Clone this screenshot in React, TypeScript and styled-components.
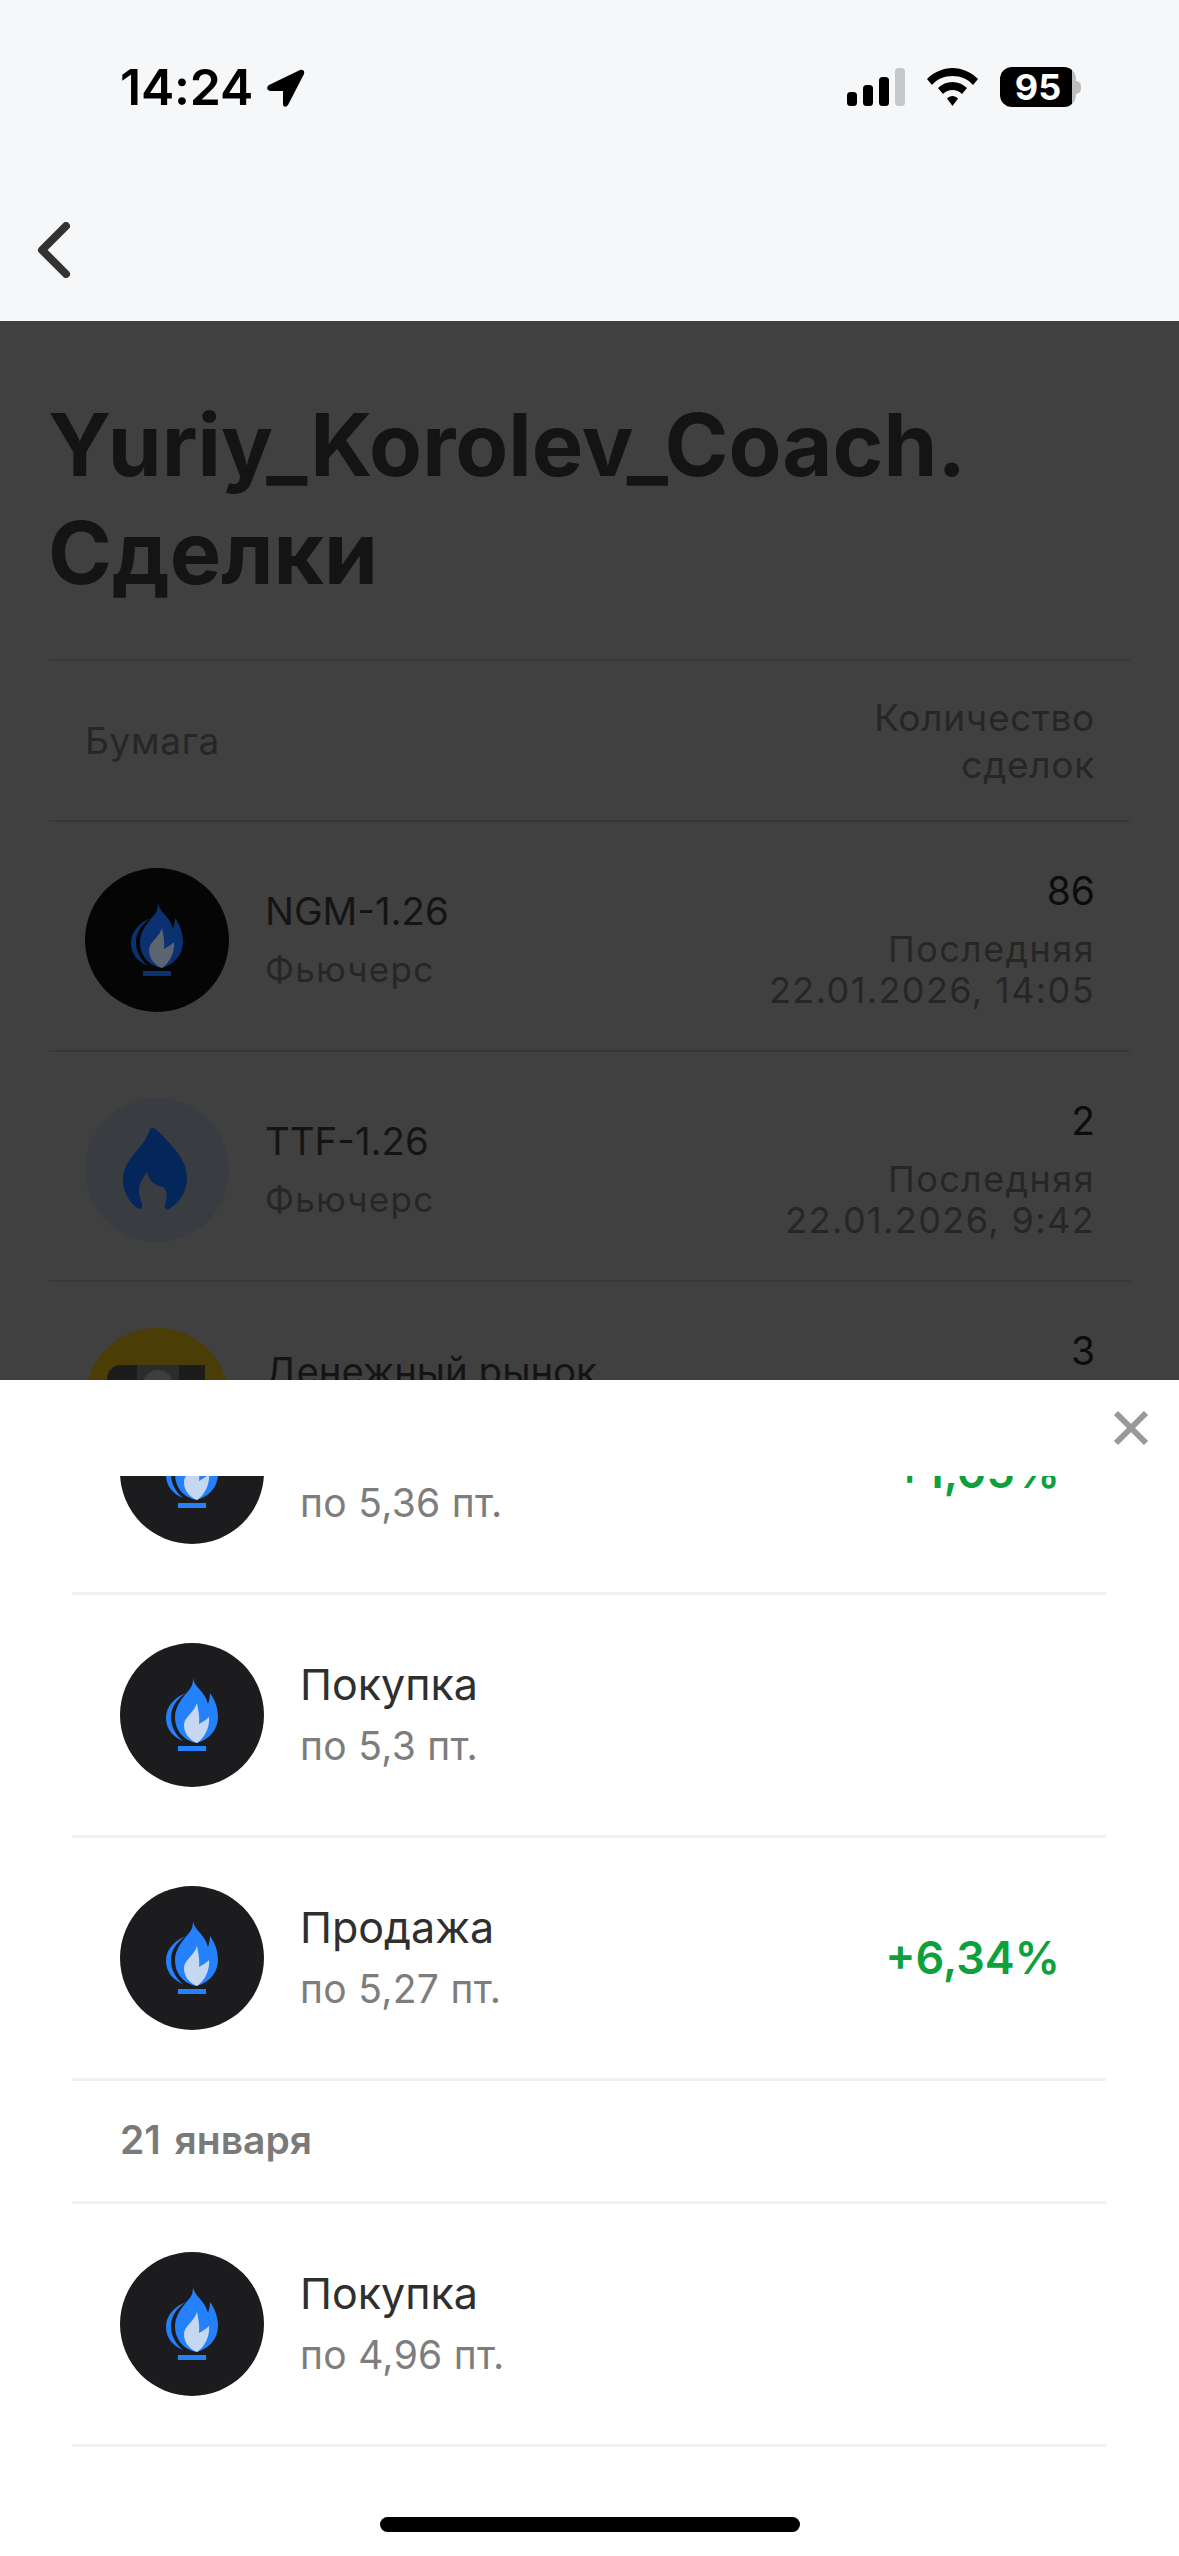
import React from 'react';
import styled, { createGlobalStyle } from 'styled-components';

const GlobalStyle = createGlobalStyle`
  html, body {
    margin: 0;
    padding: 0;
    background: #fff;
    font-family: "Inter", "Liberation Sans", sans-serif;
  }
  * {
    box-sizing: border-box;
  }
`;

const Page = styled.div`
  position: relative;
  width: 1179px;
  height: 2556px;
  display: flex;
  flex-direction: column;
  overflow: hidden;
`;

const TopArea = styled.header`
  height: 321px;
  flex: none;
  background: #f6f7f9;
  display: flex;
  flex-direction: column;
`;

const StatusBar = styled.div`
  height: 174px;
  padding: 67px 98px 0 120px;
  display: flex;
  justify-content: space-between;
  align-items: flex-start;
`;

const TimeGroup = styled.div`
  display: flex;
  align-items: center;
  gap: 13px;
`;

const Time = styled.span`
  font-size: 50px;
  line-height: 41px;
  font-weight: 600;
  color: #000;
  letter-spacing: -0.2px;
`;

const StatusIcons = styled.div`
  display: flex;
  align-items: center;
  gap: 22px;
`;

const Battery = styled.div`
  display: flex;
  align-items: center;
`;

const BatteryBody = styled.div`
  width: 76px;
  height: 40px;
  border-radius: 12px;
  background: linear-gradient(90deg, #000 95%, #bdbdbd 95%);
  color: #fff;
  font-size: 36px;
  font-weight: 700;
  display: flex;
  align-items: center;
  justify-content: center;
`;

const BatteryNub = styled.div`
  width: 5px;
  height: 13px;
  border-radius: 0 6px 6px 0;
  background: #bdbdbd;
`;

const NavBar = styled.nav`
  padding: 48px 0 0 36px;
`;

const DimArea = styled.main`
  flex: 1;
  background: #404040;
  padding: 70px 49px 0;
  overflow: hidden;
`;

const Title = styled.h1`
  margin: 0 0 52px -1px;
  font-size: 86.5px;
  line-height: 108px;
  font-weight: 700;
  color: #141414;
`;

const Table = styled.div`
  border-top: 2px solid #383838;
`;

const HeaderRow = styled.div`
  height: 161px;
  padding: 0 35px 0 36px;
  border-bottom: 2px solid #383838;
  display: flex;
  justify-content: space-between;
  align-items: center;
  font-size: 37px;
  line-height: 47px;
  letter-spacing: 0.7px;
  color: #262626;
`;

const HeaderRight = styled.div`
  text-align: right;
`;

const TableRow = styled.div`
  height: 230px;
  padding: 8px 35px 0 36px;
  border-bottom: 2px solid #383838;
  display: flex;
  align-items: center;
  gap: 36px;
`;

const Avatar = styled.div<{ $bg: string }>`
  width: 144px;
  height: 144px;
  flex: none;
  border-radius: 50%;
  background: ${(p) => p.$bg};
  overflow: hidden;
`;

const RowNames = styled.div`
  flex: 1;
  display: flex;
  flex-direction: column;
  gap: 14px;
`;

const RowName = styled.div`
  font-size: 38.4px;
  line-height: 44px;
  color: #141414;
`;

const RowKind = styled.div`
  font-size: 35px;
  line-height: 44px;
  letter-spacing: 1.3px;
  color: #262626;
`;

const RowStats = styled.div`
  align-self: flex-start;
  padding-top: 39px;
  text-align: right;
`;

const RowCount = styled.div`
  font-size: 39px;
  line-height: 44px;
  color: #0c0c0c;
  margin-bottom: 16px;
`;

const RowLast = styled.div`
  font-size: 36px;
  line-height: 41px;
  letter-spacing: 1.4px;
  color: #262626;
`;

const Sheet = styled.section`
  position: absolute;
  left: 0;
  right: 0;
  top: 1380px;
  bottom: 0;
  background: #fff;
  padding: 96px 73px 0 72px;
`;

const CloseButton = styled.button`
  position: absolute;
  top: 30px;
  right: 30px;
  width: 36px;
  height: 36px;
  padding: 0;
  border: none;
  background: none;
  display: flex;
`;

const ListClip = styled.div`
  height: 100%;
  overflow: hidden;
`;

const List = styled.div`
  margin-top: -124px;
`;

const DealRow = styled.div`
  height: 243px;
  padding: 0 46px 0 48px;
  border-bottom: 3px solid #f0f1f3;
  display: flex;
  align-items: center;
  gap: 36px;
`;

const DealText = styled.div`
  flex: 1;
  display: flex;
  flex-direction: column;
  gap: 9px;
  padding-bottom: 4px;
`;

const DealTitle = styled.div`
  font-size: 43px;
  line-height: 56px;
  color: #2f2f2f;
`;

const DealPrice = styled.div`
  font-size: 39px;
  line-height: 50px;
  letter-spacing: 0.3px;
  color: #7d7d7d;
`;

const DealResult = styled.div`
  font-size: 45px;
  line-height: 56px;
  font-weight: 600;
  color: #0ca13c;
`;

const DateRow = styled.div`
  height: 123px;
  padding: 0 48px 3px;
  border-bottom: 3px solid #f0f1f3;
  display: flex;
  align-items: center;
  font-size: 39px;
  font-weight: 600;
  word-spacing: 4px;
  color: #7a7a7a;
`;

const HomeIndicator = styled.div`
  position: absolute;
  left: 380px;
  bottom: 24px;
  width: 420px;
  height: 15px;
  border-radius: 8px;
  background: #000;
`;

const GasFlame = ({ main, inner }: { main: string; inner: string }) => (
  <svg width="144" height="144" viewBox="0 0 144 144">
    <path
      d="M66 50C56 54 46 62 46 75C46 86 53 94 63 98C56 92 51 84 51 74C51 64 57 56 66 50Z"
      fill={main}
    />
    <path
      d="M73 35C74 42 80 46 84 52C86 55 87 58 88 61C89 57 90 54 90 50C95 57 98 65 98 74C98 86 90 96 77 100C64 98 55 88 55 74C55 63 63 54 69 47C72 44 73 40 73 35Z"
      fill={main}
    />
    <path
      d="M77 60C78 66 80 73 79 81C83 79 87 76 89 74C90 82 86 94 77 100C69 97 64 90 64 82C64 74 74 70 77 60Z"
      fill={inner}
    />
    <rect x="58" y="103" width="28" height="5" fill={main} />
  </svg>
);

const DropFlame = () => (
  <svg width="144" height="144" viewBox="0 0 144 144">
    <path
      d="M65 31C67 29 70 30 72 32C86 47 102 60 102 80C102 94 94 105 84 111C81 112 79 110 80 106C83 98 82 92 78 89C72 88 64 84 62 74C58 80 54 86 54 92C54 98 56 102 57 106C58 110 55 112 52 110C44 104 38 93 38 82C38 60 60 50 65 31Z"
      fill="#05265a"
    />
  </svg>
);

const MoneyLogo = () => (
  <svg width="144" height="144" viewBox="0 0 144 144">
    <path d="M36 37H120V127H22V51C22 43 28 37 36 37Z" fill="#1c1c1c" />
    <rect x="52" y="37" width="42" height="90" fill="#2c2c2c" />
    <circle cx="73" cy="57" r="15" fill="#3e3e3e" />
  </svg>
);

const deals = [
  { id: 1, title: 'Продажа', price: 'по 5,36 пт.', result: '+1,05%' },
  { id: 2, title: 'Покупка', price: 'по 5,3 пт.' },
  { id: 3, title: 'Продажа', price: 'по 5,27 пт.', result: '+6,34%' },
];

const App = () => (
  <Page lang="ru">
    <GlobalStyle />
    <TopArea>
      <StatusBar>
        <TimeGroup>
          <Time>14:24</Time>
          <svg width="40" height="40" viewBox="0 0 40 40">
            <path
              d="M3 17L34 2C37 1 39 3 38 6L22 37C20 40 17 39 17 36L17 23L5 23C1 23 0 19 3 17Z"
              fill="#000"
            />
          </svg>
        </TimeGroup>
        <StatusIcons>
          <svg width="58" height="38" viewBox="0 0 58 38">
            <rect x="0" y="24" width="10" height="14" rx="3.5" fill="#000" />
            <rect x="16" y="17" width="10" height="21" rx="3.5" fill="#000" />
            <rect x="32" y="9" width="10" height="29" rx="3.5" fill="#000" />
            <rect x="48" y="0" width="10" height="38" rx="3.5" fill="#c6c7c9" />
          </svg>
          <svg width="51" height="38" viewBox="0 0 51 38">
            <path
              d="M25.5 0C35 0 44 4 51 11L46 17C41 11 33.5 8 25.5 8C17.5 8 10 11 5 17L0 11C7 4 16 0 25.5 0Z"
              fill="#000"
            />
            <path
              d="M25.5 14C31 14 36 16 40 20L35 26C32.5 23.5 29 22 25.5 22C22 22 18.5 23.5 16 26L11 20C15 16 20 14 25.5 14Z"
              fill="#000"
            />
            <path
              d="M25.5 28C27.5 28 29.5 29 31 30.5L25.5 38L20 30.5C21.5 29 23.5 28 25.5 28Z"
              fill="#000"
            />
          </svg>
          <Battery>
            <BatteryBody>95</BatteryBody>
            <BatteryNub />
          </Battery>
        </StatusIcons>
      </StatusBar>
      <NavBar>
        <svg width="36" height="56" viewBox="0 0 36 56">
          <path
            d="M30 4L6 28L30 52"
            fill="none"
            stroke="#333"
            strokeWidth="8"
            strokeLinecap="round"
            strokeLinejoin="round"
          />
        </svg>
      </NavBar>
    </TopArea>

    <DimArea>
      <Title>
        Yuriy_Korolev_Coach.
        <br />
        Сделки
      </Title>
      <Table>
        <HeaderRow>
          <div>Бумага</div>
          <HeaderRight>
            Количество
            <br />
            сделок
          </HeaderRight>
        </HeaderRow>
        <TableRow>
          <Avatar $bg="#050505">
            <GasFlame main="#0c3170" inner="#5c6470" />
          </Avatar>
          <RowNames>
            <RowName>NGM-1.26</RowName>
            <RowKind>Фьючерс</RowKind>
          </RowNames>
          <RowStats>
            <RowCount>86</RowCount>
            <RowLast>Последняя</RowLast>
            <RowLast>22.01.2026, 14:05</RowLast>
          </RowStats>
        </TableRow>
        <TableRow>
          <Avatar $bg="#393d42">
            <DropFlame />
          </Avatar>
          <RowNames>
            <RowName>TTF-1.26</RowName>
            <RowKind>Фьючерс</RowKind>
          </RowNames>
          <RowStats>
            <RowCount>2</RowCount>
            <RowLast>Последняя</RowLast>
            <RowLast>22.01.2026, 9:42</RowLast>
          </RowStats>
        </TableRow>
        <TableRow>
          <Avatar $bg="#4a3d06">
            <MoneyLogo />
          </Avatar>
          <RowNames>
            <RowName>Денежный рынок</RowName>
            <RowKind>Фонд</RowKind>
          </RowNames>
          <RowStats>
            <RowCount>3</RowCount>
            <RowLast>Последняя</RowLast>
          </RowStats>
        </TableRow>
      </Table>
    </DimArea>

    <Sheet>
      <CloseButton aria-label="Закрыть">
        <svg width="36" height="36" viewBox="0 0 36 36">
          <path d="M3 3L33 33M33 3L3 33" stroke="#999" strokeWidth="6" />
        </svg>
      </CloseButton>
      <ListClip>
        <List>
          {deals.map((deal) => (
            <DealRow key={deal.id}>
              <Avatar $bg="#1c1c1e">
                <GasFlame main="#2480fb" inner="#c6d8f1" />
              </Avatar>
              <DealText>
                <DealTitle>{deal.title}</DealTitle>
                <DealPrice>{deal.price}</DealPrice>
              </DealText>
              {deal.result && <DealResult>{deal.result}</DealResult>}
            </DealRow>
          ))}
          <DateRow>21 января</DateRow>
          <DealRow>
            <Avatar $bg="#1c1c1e">
              <GasFlame main="#2480fb" inner="#c6d8f1" />
            </Avatar>
            <DealText>
              <DealTitle>Покупка</DealTitle>
              <DealPrice>по 4,96 пт.</DealPrice>
            </DealText>
          </DealRow>
        </List>
      </ListClip>
      <HomeIndicator />
    </Sheet>
  </Page>
);

export default App;
